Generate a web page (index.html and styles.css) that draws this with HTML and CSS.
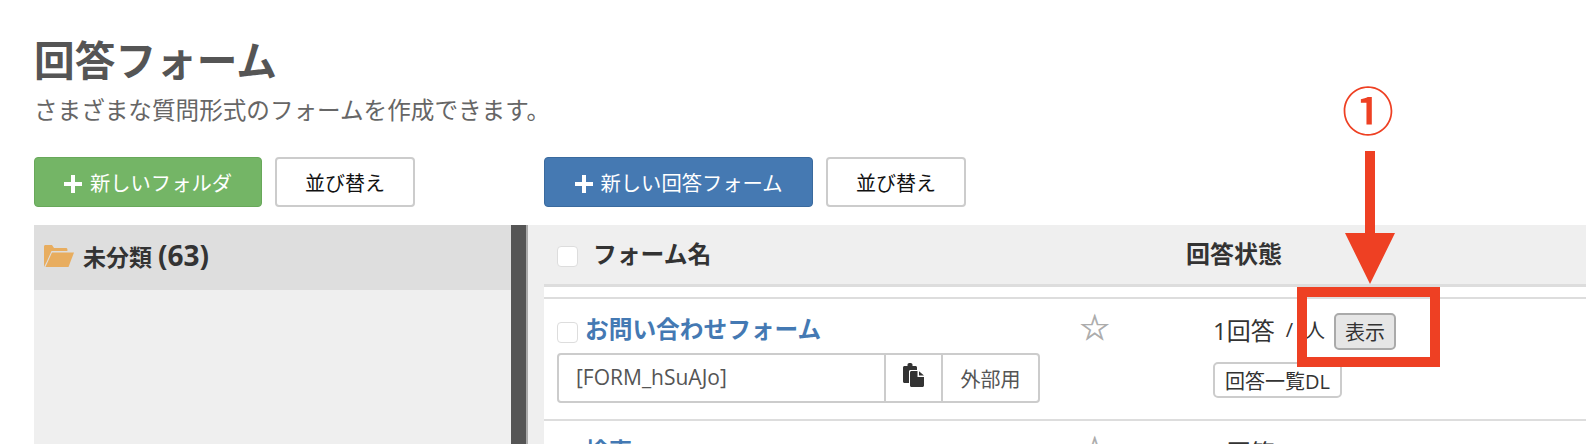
FILE: index.html
```html
<!DOCTYPE html>
<html lang="ja">
<head>
    <meta charset="UTF-8">
    <meta name="viewport" content="width=device-width, initial-scale=1.0">
    <title>回答フォーム</title>
    <link rel="stylesheet" href="styles.css">
</head>
<body>
    <div class="page-head">
        <h1>回答フォーム</h1>
        <p class="lead">さまざまな質問形式のフォームを作成できます。</p>
    </div>

    <div class="layout">
        <div class="toolbar">
            <button class="btn btn-green btn-folder">
                <svg class="plus" viewBox="0 0 18 18"><path d="M7 0h4v7h7v4h-7v7H7v-7H0V7h7z"/></svg>新しいフォルダ
            </button>
            <button class="btn btn-sort">並び替え</button>
        </div>
        <div class="toolbar toolbar-right">
            <button class="btn btn-blue">
                <svg class="plus" viewBox="0 0 18 18"><path d="M7 0h4v7h7v4h-7v7H7v-7H0V7h7z"/></svg>新しい回答フォーム
            </button>
            <button class="btn btn-sort">並び替え</button>
        </div>

        <aside class="side">
            <div class="folders">
                <div class="folder-row">
                    <svg class="folder-icon" viewBox="0 0 30 23"><path d="M0 23V2.500C0 1.600.6 1 1.500 1H8l2 3h12c.8 0 1.400.6 1.400 1.400V7H7.500L2.800 17.500 1.500 20z"/><path d="M1.500 23 8 8.500h22L24.500 23z"/></svg>
                    <span class="folder-name">未分類 <span class="count">(63)</span></span>
                </div>
            </div>
            <div class="splitter"></div>
        </aside>

        <main class="forms">
            <div class="list-head">
                <span class="check"></span>
                <span class="col-name">フォーム名</span>
                <span class="col-state">回答状態</span>
            </div>

            <div class="form-row first">
                <div class="form-main">
                    <div class="form-title">
                        <span class="check"></span>
                        <a class="form-link">お問い合わせフォーム</a>
                    </div>
                    <div class="code-group">
                        <span class="code-text">[FORM_hSuAJo]</span>
                        <span class="code-copy">
                            <svg viewBox="0 0 21 24"><path d="M1.500 3H4.500V1.800C4.500.8 5.300 0 6.300 0h1.400c1 0 1.800.8 1.800 1.800V3h3c.8 0 1.500.7 1.500 1.500V7H7.500C6.700 7 6 7.700 6 8.500V20H1.500C.7 20 0 19.300 0 18.500v-14C0 3.700.7 3 1.500 3z"/><path d="M8.500 8H14.500v6H21v8.500c0 .8-.7 1.500-1.500 1.500h-11C7.700 24 7 23.300 7 22.500v-13C7 8.700 7.700 8 8.500 8zM16 8.200 21 12.500h-5z"/></svg>
                        </span>
                        <span class="code-ext">外部用</span>
                    </div>
                </div>
                <span class="star">☆</span>
                <div class="form-state">
                    <div class="state-line">
                        <span class="state-text">1回答</span><span class="state-text slash">/</span><span class="state-text people">人</span>
                        <button class="btn-show">表示</button>
                    </div>
                    <button class="btn-dl">回答一覧DL</button>
                </div>
            </div>

            <div class="form-row">
                <div class="form-main">
                    <div class="form-title">
                        <span class="check"></span>
                        <a class="form-link">検索</a>
                    </div>
                </div>
                <span class="star">☆</span>
                <div class="form-state">
                    <div class="state-line"><span class="state-text">0回答</span></div>
                </div>
            </div>
        </main>
    </div>

    <!-- 注釈 -->
    <div class="note-num">①</div>
    <svg class="note-arrow" viewBox="0 0 50 133"><path d="M20 0h10v82h20L25 133 0 82h20z"/></svg>
    <div class="note-box"></div>
</body>
</html>
```

FILE: styles.css
```css
html, body {
    height: 444px;
    overflow: hidden;
}
body {
    margin: 0;
    background: #fff;
    color: #333;
    font-family: "Open Sans", "Noto Sans CJK JP", sans-serif;
    position: relative;
}
.page-head {
    padding: 34px 0 0 34px;
    height: 157px;
    box-sizing: border-box;
}
h1 {
    margin: 0;
    font-size: 40.700px;
    line-height: 52px;
    font-weight: 700;
    color: #555;
}
.lead {
    margin: 9px 0 0;
    font-size: 23.600px;
    line-height: 30px;
    color: #666;
}
.layout {
    display: grid;
    grid-template-columns: 494px 1fr;
    grid-template-rows: 68px 1fr;
    padding-left: 34px;
}
.toolbar {
    display: flex;
    gap: 13px;
    align-items: flex-start;
}
.toolbar-right {
    padding-left: 16px;
}
.btn {
    height: 50px;
    padding: 0;
    box-sizing: border-box;
    border-radius: 4px;
    font-family: inherit;
    font-size: 20.300px;
    cursor: pointer;
}
.btn-sort {
    width: 140px;
    background: #fff;
    border: 2px solid #ccc;
    color: #111;
    font-size: 20px;
}
.btn-green {
    width: 228px;
    background: #74b566;
    border: 1px solid #68a85a;
    color: #fff;
}
.btn-blue {
    width: 269px;
    background: #4579b2;
    border: 1px solid #3a6a9e;
    color: #fff;
}
.plus {
    width: 18px;
    height: 18px;
    fill: #fff;
    margin-right: 8px;
    vertical-align: -2px;
}
.side {
    display: flex;
    height: 219px;
}
.folders {
    width: 477px;
    background: #efefef;
}
.folder-row {
    height: 65px;
    background: #dedede;
    display: flex;
    align-items: center;
    padding-left: 10px;
    font-size: 23px;
    font-weight: 700;
}
.folder-name {
    margin-bottom: 6px;
}
.count {
    font-size: 28px;
}
.folder-icon {
    width: 30px;
    height: 23px;
    fill: #e8ad5f;
    margin: 0 9px 4px 0;
}
.splitter {
    width: 15px;
    background: #555;
    border-right: 2px solid #aaa;
}
.forms {
    background: #efefef;
    padding-left: 16px;
    height: 219px;
    overflow: hidden;
}
.list-head {
    height: 62px;
    margin-left: -16px;
    padding: 0 0 3px 29px;
    box-sizing: border-box;
    display: flex;
    align-items: center;
    font-size: 23.800px;
    font-weight: 700;
    position: relative;
}
.list-head::after {
    content: "";
    position: absolute;
    left: 16px;
    right: 0;
    bottom: 0;
    height: 3px;
    background: #ddd;
}
.list-head .check {
    margin-top: 3px;
}
.check {
    display: block;
    flex: none;
    width: 21px;
    height: 21px;
    box-sizing: border-box;
    background: #fff;
    border: 1px solid #ddd;
    border-radius: 4px;
}
.col-name {
    margin: 0 0 4px 15px;
    width: 593px;
}
.col-state {
    font-size: 24px;
    margin-bottom: 4px;
}
.form-row {
    display: flex;
    background: #fff;
    padding: 14px 0 0 13px;
    height: 124px;
    box-sizing: border-box;
    border-bottom: 2px solid #ddd;
}
.form-row.first {
    border-top: 2px solid #ddd;
    box-shadow: 0 -10px 0 #fff;
    margin-top: 10px;
}
.form-main {
    width: 522px;
}
.form-title {
    display: flex;
    align-items: center;
    gap: 7px;
    height: 30px;
}
.form-title .check {
    margin-top: 8px;
}
.form-link {
    color: #4479b3;
    font-size: 23.700px;
    font-weight: 700;
}
.code-group {
    display: flex;
    width: 483px;
    height: 50px;
    margin-top: 10px;
    box-sizing: border-box;
    border: 2px solid #ccc;
    border-radius: 4px;
    font-size: 20px;
    color: #555;
}
.code-text {
    width: 327px;
    box-sizing: border-box;
    padding: 8px 0 0 17px;
    border-right: 2px solid #ccc;
    font-size: 21px;
}
.code-copy {
    width: 55px;
    border-right: 2px solid #ccc;
    display: flex;
    justify-content: center;
    padding-top: 8px;
}
.code-copy svg {
    width: 21px;
    height: 24px;
    fill: #333;
}
.code-ext {
    flex: 1;
    text-align: center;
    padding-top: 9px;
}
.star {
    font-family: "DejaVu Sans", sans-serif;
    font-size: 35px;
    line-height: 30px;
    color: #aaa;
    -webkit-text-stroke: 0.6px #aaa;
    width: 134px;
    flex: none;
}
.form-state {
    font-size: 24px;
}
.state-line {
    display: flex;
    align-items: center;
    height: 37px;
    white-space: nowrap;
}
.state-text {
    margin-bottom: 5px;
}
.slash {
    margin: 0 12px 5px 11px;
    font-size: 20px;
}
.people {
    font-size: 20px;
}
.btn-show {
    width: 62px;
    height: 37px;
    margin-left: 9px;
    padding: 0;
    background: #e6e6e6;
    border: 2px solid #aaa;
    border-radius: 5px;
    font-family: inherit;
    font-size: 20px;
    color: #333;
}
.btn-dl {
    display: block;
    width: 129px;
    height: 36px;
    margin-top: 12px;
    padding: 0;
    background: #fff;
    border: 2px solid #ccc;
    border-radius: 5px;
    font-family: inherit;
    font-size: 20px;
    color: #333;
}

/* 注釈 */
.note-num {
    position: absolute;
    left: 1338px;
    top: 72px;
    width: 60px;
    text-align: center;
    font-family: "Noto Sans CJK JP", sans-serif;
    font-size: 52px;
    font-weight: 500;
    line-height: 74px;
    color: #ee4023;
}
.note-arrow {
    position: absolute;
    left: 1345px;
    top: 151px;
    width: 50px;
    height: 133px;
    fill: #ee4023;
}
.note-box {
    position: absolute;
    left: 1297px;
    top: 287px;
    width: 143px;
    height: 80px;
    box-sizing: border-box;
    border: 10px solid #ee4023;
}
```
